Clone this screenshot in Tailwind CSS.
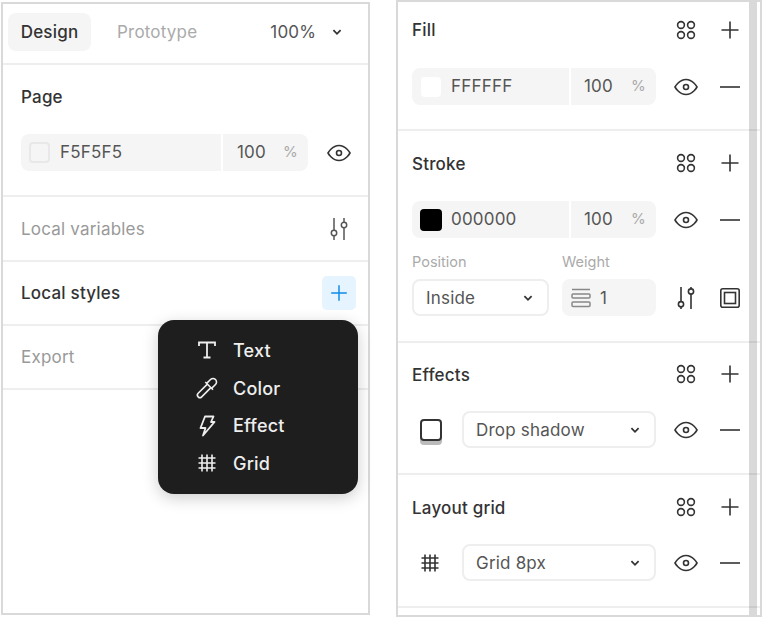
<!DOCTYPE html>
<html lang="en">
<head>
    <meta charset="UTF-8">
    <title>Design panel</title>
    <script src="https://cdn.jsdelivr.net/npm/@tailwindcss/browser@4"></script>
</head>
<body class="bg-white font-['Inter',sans-serif] text-[17px] tracking-[0.2px] text-[#333] overflow-hidden">

    <!-- shared icons -->
    <svg class="hidden">
        <symbol id="i-eye" viewBox="0 0 24 24"><path d="M1 12s4-7.500 11-7.500S23 12 23 12s-4 7.500-11 7.500S1 12 1 12z" fill="none" stroke="currentColor" stroke-width="1.600"/><circle cx="12" cy="12" r="2.500" fill="none" stroke="currentColor" stroke-width="1.600"/></symbol>
        <symbol id="i-plus" viewBox="0 0 24 24"><path d="M12 3.500v17M3.500 12h17" fill="none" stroke="currentColor" stroke-width="1.600"/></symbol>
        <symbol id="i-minus" viewBox="0 0 24 24"><path d="M2 12h20" fill="none" stroke="currentColor" stroke-width="1.600"/></symbol>
        <symbol id="i-styles" viewBox="0 0 24 24"><g fill="none" stroke="currentColor" stroke-width="1.600"><circle cx="7" cy="7" r="3.400"/><circle cx="17" cy="7" r="3.400"/><circle cx="7" cy="17" r="3.400"/><circle cx="17" cy="17" r="3.400"/></g></symbol>
        <symbol id="i-sliders" viewBox="0 0 24 24"><g fill="none" stroke="currentColor" stroke-width="1.600"><path d="M7 1v14.500M7 21v2M17 1v2M17 8v15"/><circle cx="7" cy="18.200" r="2.600"/><circle cx="17" cy="5.500" r="2.600"/></g></symbol>
        <symbol id="i-grid" viewBox="0 0 24 24"><path d="M7 3.500v17M12 3.500v17M17 3.500v17M3.500 7h17M3.500 12h17M3.500 17h17" fill="none" stroke="currentColor" stroke-width="1.600"/></symbol>
        <symbol id="i-chevron" viewBox="0 0 10 10"><path d="M2 3.500 5 6.500 8 3.500" fill="none" stroke="currentColor" stroke-width="1.500"/></symbol>
    </svg>

    <div class="flex items-start">

        <!-- left panel -->
        <div class="relative ml-[1px] mt-[2px] w-[369px] h-[613px] border-2 border-[#d9d9d9]">
            <div class="flex items-center h-[61px] border-b-2 border-[#eee] pl-[5px] pb-[3px]">
                <div class="flex items-center justify-center w-[83px] h-[38px] pt-[2px] rounded-[8px] bg-[#f5f5f5] font-medium text-[#333]">Design</div>
                <div class="ml-[26px] pt-[2px] text-[#aaa]">Prototype</div>
                <div class="ml-[73px] pt-[2px] text-[#555]">100%</div>
                <svg class="ml-[15px] w-[12px] h-[12px] text-[#333]"><use href="#i-chevron"/></svg>
            </div>

            <div class="h-[132px] border-b-2 border-[#eee] pl-[18px] pt-[20px]">
                <div class="pt-[1px] h-[22px] font-medium leading-[22px]">Page</div>
                <div class="flex items-center mt-[27px]">
                    <div class="flex items-center w-[287px] h-[37px] rounded-[8px] bg-[#f5f5f5]">
                        <div class="flex items-center w-[202px] h-full border-r-2 border-white pl-[8px]">
                            <div class="w-[21px] h-[21px] rounded-[4px] bg-[#f5f5f5] border-2 border-[#e8e8e8]"></div>
                            <span class="ml-[10px] text-[#555]">F5F5F5</span>
                        </div>
                        <span class="ml-[14px] text-[#555]">100</span>
                        <span class="ml-[17px] text-[15px] text-[#aaa]">%</span>
                    </div>
                    <svg class="ml-[19px] w-[24px] h-[24px] text-[#333]"><use href="#i-eye"/></svg>
                </div>
            </div>

            <div class="flex items-center justify-between h-[65px] border-b-2 border-[#eee] pl-[18px] pr-[17px] text-[#999]">
                <span class="pt-[2px]">Local variables</span>
                <svg class="w-[24px] h-[24px] text-[#555]" viewBox="0 0 24 24"><g fill="none" stroke="currentColor" stroke-width="1.500"><path d="M7 1v12M7 19v4M17 1v4M17 11v12"/><circle cx="7" cy="16" r="2.700"/><circle cx="17" cy="8" r="2.700"/></g></svg>
            </div>

            <div class="flex items-center justify-between h-[64px] border-b-2 border-[#eee] pl-[18px] pr-[12px]">
                <span class="pt-[2px] font-medium">Local styles</span>
                <div class="flex items-center justify-center w-[34px] h-[34px] rounded-[5px] bg-[#e5f4ff] text-[#0d8ce9]">
                    <svg class="w-[22px] h-[22px]"><use href="#i-plus"/></svg>
                </div>
            </div>

            <div class="flex items-center h-[64px] border-b-2 border-[#eee] pl-[18px] pt-[2px] text-[#999]">Export</div>

            <!-- add style menu -->
            <div class="absolute left-[155px] top-[316px] w-[200px] h-[174px] rounded-[16px] bg-[#1e1e1e] text-[18px] text-[#eee] font-medium shadow-[0_4px_16px_rgba(0,0,0,0.2)] pl-[37px] pt-[11px]">
                <div class="flex items-center h-[38px] gap-[14px]">
                    <svg class="w-[24px] h-[24px]" viewBox="0 0 24 24"><path d="M4 8V4.500h16V8M12 4.500v15M8.500 19.500h7" fill="none" stroke="currentColor" stroke-width="1.800"/></svg>
                    <span>Text</span>
                </div>
                <div class="flex items-center h-[38px] gap-[14px]">
                    <svg class="w-[24px] h-[24px]" viewBox="0 0 24 24"><g transform="rotate(45 12 12)" fill="none" stroke="currentColor" stroke-width="1.600"><path d="M8.500 9V3.500a3.500 3.500 0 0 1 7 0V9"/><path d="M6.500 9h11"/><path d="M9.500 9v13a2.500 2.500 0 0 0 5 0V9"/></g></svg>
                    <span>Color</span>
                </div>
                <div class="flex items-center h-[37px] gap-[14px]">
                    <svg class="w-[24px] h-[24px]" viewBox="0 0 24 24"><path d="M10 2.500h8.500l-2.500 5.500h3.500L8 21.500l2.500-7.500H5.500z" fill="none" stroke="currentColor" stroke-width="1.800" stroke-linejoin="round"/></svg>
                    <span>Effect</span>
                </div>
                <div class="flex items-center h-[38px] gap-[14px]">
                    <svg class="w-[24px] h-[24px]"><use href="#i-grid"/></svg>
                    <span>Grid</span>
                </div>
            </div>
        </div>

        <!-- right panel -->
        <div class="relative ml-[26px] w-[366px] h-[617px] border-2 border-[#d9d9d9]">

            <div class="h-[129px] border-b-2 border-[#eee] pl-[14px] pt-[17px]">
                <div class="flex items-center h-[22px]">
                    <span class="w-[252px] mt-[2px] font-medium">Fill</span>
                    <svg class="w-[24px] h-[24px] mx-[10px]"><use href="#i-styles"/></svg>
                    <svg class="w-[24px] h-[24px] mx-[10px]"><use href="#i-plus"/></svg>
                </div>
                <div class="flex items-center mt-[27px]">
                    <div class="flex items-center w-[244px] h-[37px] rounded-[8px] bg-[#f5f5f5]">
                        <div class="flex items-center w-[159px] h-full border-r-2 border-white pl-[9px]">
                            <div class="w-[20px] h-[20px] rounded-[4px] bg-white"></div>
                            <span class="ml-[10px] text-[#555]">FFFFFF</span>
                        </div>
                        <span class="ml-[13px] text-[#555]">100</span>
                        <span class="ml-[18px] text-[15px] text-[#aaa]">%</span>
                    </div>
                    <svg class="w-[24px] h-[24px] ml-[18px] mr-[10px]"><use href="#i-eye"/></svg>
                    <svg class="w-[24px] h-[24px] mx-[10px]"><use href="#i-minus"/></svg>
                </div>
            </div>

            <div class="h-[212px] border-b-2 border-[#eee] pl-[14px] pt-[21px]">
                <div class="flex items-center h-[22px]">
                    <span class="w-[252px] mt-[3px] font-medium">Stroke</span>
                    <svg class="w-[24px] h-[24px] mx-[10px]"><use href="#i-styles"/></svg>
                    <svg class="w-[24px] h-[24px] mx-[10px]"><use href="#i-plus"/></svg>
                </div>
                <div class="flex items-center mt-[27px]">
                    <div class="flex items-center w-[244px] h-[37px] rounded-[8px] bg-[#f5f5f5]">
                        <div class="flex items-center w-[159px] h-full border-r-2 border-white pl-[8px]">
                            <div class="w-[22px] h-[22px] rounded-[4px] bg-black"></div>
                            <span class="ml-[9px] text-[#555]">000000</span>
                        </div>
                        <span class="ml-[13px] text-[#555]">100</span>
                        <span class="ml-[18px] text-[15px] text-[#aaa]">%</span>
                    </div>
                    <svg class="w-[24px] h-[24px] ml-[18px] mr-[10px]"><use href="#i-eye"/></svg>
                    <svg class="w-[24px] h-[24px] mx-[10px]"><use href="#i-minus"/></svg>
                </div>
                <div class="flex items-center mt-[15px] h-[18px] text-[14.500px] tracking-normal text-[#aaa]">
                    <span class="w-[150px]">Position</span>
                    <span>Weight</span>
                </div>
                <div class="flex items-center mt-[8px]">
                    <div class="flex items-center justify-between w-[137px] h-[37px] rounded-[8px] border-2 border-[#eee] pl-[12px] pr-[13px] text-[#555]">
                        <span class="pt-[2px]">Inside</span>
                        <svg class="w-[12px] h-[12px] text-[#333]"><use href="#i-chevron"/></svg>
                    </div>
                    <div class="flex items-center w-[94px] h-[37px] ml-[13px] rounded-[8px] bg-[#f5f5f5] pl-[9px] text-[#555]">
                        <svg class="w-[20px] h-[20px] text-[#888]" viewBox="0 0 20 20"><path d="M1 1.500h18" stroke="currentColor" stroke-width="1.500"/><rect x="1" y="6" width="18" height="4" rx="1" fill="none" stroke="currentColor" stroke-width="1.500"/><rect x="1" y="14" width="18" height="4.500" rx="1" fill="none" stroke="currentColor" stroke-width="1.500"/></svg>
                        <span class="ml-[9px] pt-[2px]">1</span>
                    </div>
                    <svg class="w-[24px] h-[24px] ml-[18px] mr-[10px]"><use href="#i-sliders"/></svg>
                    <svg class="w-[24px] h-[24px] mx-[10px]" viewBox="0 0 24 24"><rect x="2.800" y="2.800" width="18.400" height="18.400" rx="2" fill="none" stroke="currentColor" stroke-width="1.600"/><rect x="6.500" y="6.500" width="11" height="11" fill="none" stroke="currentColor" stroke-width="1.600"/></svg>
                </div>
            </div>

            <div class="h-[132px] border-b-2 border-[#eee] pl-[14px] pt-[20px]">
                <div class="flex items-center h-[22px]">
                    <span class="w-[252px] mt-[3px] font-medium">Effects</span>
                    <svg class="w-[24px] h-[24px] mx-[10px]"><use href="#i-styles"/></svg>
                    <svg class="w-[24px] h-[24px] mx-[10px]"><use href="#i-plus"/></svg>
                </div>
                <div class="flex items-center mt-[26px]">
                    <div class="w-[50px] pl-[8px]">
                        <div class="w-[22px] h-[22px] rounded-[4px] bg-white border-2 border-[#333] shadow-[0_4px_0_#bbb]"></div>
                    </div>
                    <div class="flex items-center justify-between w-[194px] h-[37px] rounded-[8px] border-2 border-[#eee] pl-[12px] pr-[13px] text-[#555]">
                        <span class="pt-[3px]">Drop shadow</span>
                        <svg class="w-[12px] h-[12px] text-[#333]"><use href="#i-chevron"/></svg>
                    </div>
                    <svg class="w-[24px] h-[24px] ml-[18px] mr-[10px]"><use href="#i-eye"/></svg>
                    <svg class="w-[24px] h-[24px] mx-[10px]"><use href="#i-minus"/></svg>
                </div>
            </div>

            <div class="h-[133px] border-b-2 border-[#eee] pl-[14px] pt-[21px]">
                <div class="flex items-center h-[22px]">
                    <span class="w-[252px] mt-[3px] font-medium">Layout grid</span>
                    <svg class="w-[24px] h-[24px] mx-[10px]"><use href="#i-styles"/></svg>
                    <svg class="w-[24px] h-[24px] mx-[10px]"><use href="#i-plus"/></svg>
                </div>
                <div class="flex items-center mt-[26px]">
                    <div class="flex justify-center w-[36px]">
                        <svg class="w-[24px] h-[24px]"><use href="#i-grid"/></svg>
                    </div>
                    <div class="ml-[14px] flex items-center justify-between w-[194px] h-[37px] rounded-[8px] border-2 border-[#eee] pl-[12px] pr-[13px] text-[#555]">
                        <span class="pt-[3px]">Grid 8px</span>
                        <svg class="w-[12px] h-[12px] text-[#333]"><use href="#i-chevron"/></svg>
                    </div>
                    <svg class="w-[24px] h-[24px] ml-[18px] mr-[10px]"><use href="#i-eye"/></svg>
                    <svg class="w-[24px] h-[24px] mx-[10px]"><use href="#i-minus"/></svg>
                </div>
            </div>

            <!-- scrollbar -->
            <div class="absolute left-[351px] top-0 bottom-0 w-[8px] bg-black/15"></div>
        </div>
    </div>
</body>
</html>
